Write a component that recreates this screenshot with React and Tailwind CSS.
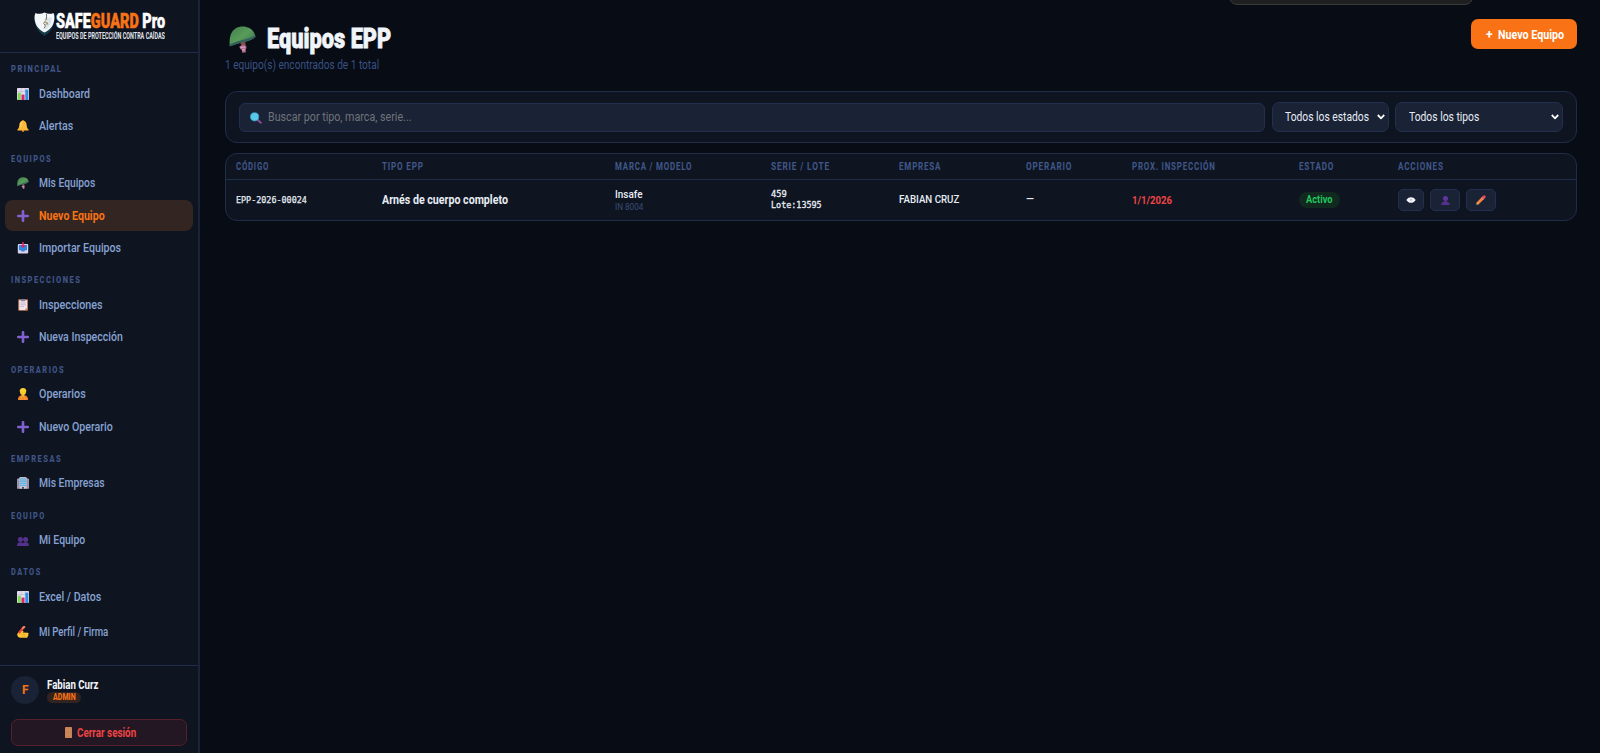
/* eslint-disable react/prop-types */
import { useState, useLayoutEffect, useRef } from 'react';

// Texto condensado a un ancho fijo
const Fit = ({ w, className = '', children }) => {
  const ref = useRef(null);
  const [scale, setScale] = useState(1);

  useLayoutEffect(() => {
    setScale(w / ref.current.offsetWidth);
  }, [w]);

  return (
    <span className={`inline-block whitespace-nowrap text-left ${className}`} style={{ width: w }}>
      <span ref={ref} className="inline-block origin-left" style={{ transform: `scaleX(${scale})` }}>
        {children}
      </span>
    </span>
  );
};

const ChartIcon = () => (
  <svg viewBox="0 0 12 12" className="size-3">
    <rect width="12" height="12" rx=".8" fill="#e4dcec" />
    <path d="M4.2 0v5M8.2 0v4M0 3.5h12" stroke="#b9aec6" strokeWidth=".5" />
    <rect x=".8" y="4.8" width="3" height="7.2" fill="#7ed957" />
    <rect x="4.5" y="6.6" width="3" height="5.4" fill="#e0246f" />
    <rect x="8.3" y="1.6" width="3" height="10.4" fill="#2f8fe0" />
  </svg>
);

const BellIcon = () => (
  <svg viewBox="0 0 12 12" className="size-3">
    <circle cx="6" cy="1.3" r="1" fill="#f0a030" />
    <circle cx="6" cy="10.8" r="1.2" fill="#d9772b" />
    <path d="M6 .6C3.6.6 2.5 2.8 2.3 5.2 2.1 7.4 1.6 8.4.6 9.3c-.4.6-.2 1.3.4 1.3h10c.6 0 .8-.7.4-1.3-1-.9-1.5-1.9-1.7-4.1C9.5 2.8 8.4.6 6 .6Z" fill="#fcb83a" />
    <path d="M5 2C4 3 3.8 5 3.6 7" stroke="#ffdc7a" strokeWidth="1" fill="none" />
  </svg>
);

const HelmetIcon = ({ className = 'size-3' }) => (
  <svg viewBox="0 0 27 27" className={className}>
    <defs>
      <linearGradient id="helmet" x1="0" y1="0" x2="1" y2="1">
        <stop offset="0" stopColor="#437f4c" />
        <stop offset=".5" stopColor="#589c5a" />
        <stop offset="1" stopColor="#356a4c" />
      </linearGradient>
    </defs>
    <path d="M11 17l5-2 .8 4.5-3.8 1.5-1-3Z" fill="#8e4c4c" />
    <path d="M10.500 20.500c1-1.300 5-1.800 6.300-.7 1.200 1.500.8 3-.3 3.500l.5 2.900-3.700.6-.6-3c-1.500-.4-2.300-2-2.200-3.300Z" fill="#b06f93" />
    <path d="M11.500 21.500l4.500-.5M13 24l3-.5" stroke="#e2a9cc" strokeWidth="1" />
    <path d="M.8 20.200C.2 13 1 6 6.500 2.500 13-1.500 22 .8 25 6.500c.8 1.700 1 2.700 1.600 4-2.600 3-6.600 4.300-11.600 5.500-4.500 1-9 2.300-14.200 4.200Z" fill="url(#helmet)" />
    <path d="M.6 18.300C9 14.500 20 13.300 26 9.300l.6 1.500C22 15.800 11 16.300.8 20.400Z" fill="#35605c" />
  </svg>
);

const PlusIcon = () => (
  <svg viewBox="0 0 12 12" className="size-3">
    <path d="M6 1.200v9.600M1.200 6h9.600" stroke="#8160cf" strokeWidth="2.600" strokeLinecap="round" />
  </svg>
);

const InboxIcon = () => (
  <svg viewBox="0 0 12 12" className="size-3">
    <rect x=".8" y="2" width="10.400" height="9.600" rx="1" fill="#dcd0ee" />
    <path d="M2 3h8v5.200H8.200L7.200 9.400H4.800L3.800 8.200H2Z" fill="#2f86dd" />
    <path d="M6 0v4M4.300 3.200 6 5 7.700 3.200" stroke="#e0245e" strokeWidth="1.500" fill="none" />
  </svg>
);

const ClipboardIcon = () => (
  <svg viewBox="0 0 12 12" className="size-3">
    <rect x="1.200" y=".2" width="9.800" height="11.600" rx=".8" fill="#c07a55" />
    <path d="M2.200 1.200H10v8L8.200 10.900h-6Z" fill="#eee6f4" />
    <rect x="4" y="0" width="4.200" height="2.200" rx=".5" fill="#8a7f99" />
    <path d="M3.400 4h5.400M3.400 5.800h5.400M3.400 7.600h3.500" stroke="#a79bb5" strokeWidth=".6" />
    <path d="M8.200 10.900V9.200H10Z" fill="#f2a45c" />
  </svg>
);

const WorkerIcon = () => (
  <svg viewBox="0 0 12 12" className="size-3">
    <path d="M1 12C.8 9 2.400 7.500 4.500 7.200h3C9.600 7.500 11.200 9 11 12Z" fill="#f3862f" />
    <path d="M4.800 6h2.400v2.200L6 9 4.800 8.200Z" fill="#f5b62c" />
    <circle cx="6" cy="4" r="3" fill="#fbc92f" />
    <path d="M2.600 3.600C2.600 1 4.200 0 6 0s3.400 1 3.400 3.600Z" fill="#f7d431" />
    <path d="M4.200 8.500v3.300M7.800 8.500v3.300" stroke="#f7b52b" strokeWidth=".7" />
  </svg>
);

const BuildingIcon = () => (
  <svg viewBox="0 0 12 12" className="size-3">
    <path d="M0 2 3 .8v11H0ZM12 2 9 .8v11h3Z" fill="#a29aae" />
    <path d="M2.600.1h6.800v11.700H2.600Z" fill="#d3cbdc" />
    <path d="M4 1.200v8.600M6 1.200v8.600M8 1.200v8.600" stroke="#29a9e8" strokeWidth="1.300" strokeDasharray="1.600 .5" />
    <path d="M1.200 3.500v6M10.800 3.500v6" stroke="#4f86ad" strokeWidth=".7" strokeDasharray="1.200 .6" />
    <rect x="5" y="10" width="2" height="1.800" fill="#5b4a52" />
  </svg>
);

const PeopleIcon = () => (
  <svg viewBox="0 0 12 12" className="mt-px size-3">
    <g fill="#54318c">
      <circle cx="3.400" cy="4.400" r="2.500" />
      <circle cx="8.600" cy="4.400" r="2.500" />
      <path d="M0 11C0 8.400 1 7.600 2.600 7.200h1.600c1 .2 1.500.5 1.800 1 .3-.5.800-.8 1.800-1h1.600C11 7.600 12 8.400 12 11Z" />
    </g>
  </svg>
);

const PersonIcon = () => (
  <svg viewBox="0 0 10 10" className="size-[9px]">
    <circle cx="5" cy="2.800" r="2.800" fill="#5f36a0" />
    <path d="M.2 10C.2 7.500 1.600 6.800 3.600 6.400V4.800h2.800v1.600c2 .4 3.400 1.100 3.400 3.600Z" fill="#54308c" />
  </svg>
);

const WritingIcon = () => (
  <svg viewBox="0 0 12 12" className="size-3">
    <path d="M.2 8C1.800 5.300 3.800 4 5.700 4.500c1 .4.900 1.500 0 2l5 .2c1.200.2 1.200 1.600.2 1.800.8.3.7 1.400-.2 1.600.3.800 0 1.700-.9 1.700H3.500C1.500 11.800.2 10.500.2 8Z" fill="#fcc533" />
    <path d="M5 8.400h3M5.500 10h3" stroke="#e49a27" strokeWidth=".6" fill="none" />
    <path d="M1.800 7.200 6.600 1.300" stroke="#ee4b3b" strokeWidth="2.200" />
    <path d="M6 2 7.200.9" stroke="#f5805e" strokeWidth="2.200" strokeLinecap="round" />
  </svg>
);

const SearchIcon = () => (
  <svg viewBox="0 0 12 12" className="mt-px size-3">
    <path d="m7.500 7.800 3.300 3" stroke="#8d4b93" strokeWidth="2" strokeLinecap="round" />
    <circle cx="4.600" cy="4.800" r="4.100" fill="#58c8ea" stroke="#3fa5cd" strokeWidth=".7" />
  </svg>
);

const DoorIcon = () => (
  <svg viewBox="0 0 7 11" className="h-[11px] w-[7px]">
    <rect width="7" height="11" rx=".6" fill="#c98256" />
    <path d="M1.500 1.500h1.300v3H1.500ZM4.200 1.500h1.300v3H4.200ZM1.500 6.500h1.300v3H1.500ZM4.200 6.500h1.300v3H4.200Z" fill="#d08b60" />
  </svg>
);

const EyeIcon = () => (
  <svg viewBox="0 0 10 8" className="h-[8px] w-[10px]">
    <path d="M.3 4C1.800 1.900 3.300 1.200 5 1.200s3.200.7 4.700 2.800C8.200 6.100 6.700 6.800 5 6.800S1.800 6.100.3 4Z" fill="#f4f4f8" />
    <circle cx="5" cy="4" r="1.300" fill="#d3d9e0" />
    <circle cx="5" cy="3.800" r=".5" fill="#97a0ab" />
  </svg>
);

const PencilIcon = () => (
  <svg viewBox="0 0 10 10" className="size-[10px]">
    <path d="M1.500 8.500 7 3" stroke="#f58440" strokeWidth="2.800" />
    <path d="M.3 9.800.8 7.300 2.700 9.200Z" fill="#f0b483" />
    <path d="m6.500 3.500 1-1" stroke="#d9cfe0" strokeWidth="2.800" />
    <path d="m7.400 2.600.9-.9" stroke="#ee4a58" strokeWidth="2.800" strokeLinecap="round" />
  </svg>
);

const ShieldLogo = () => (
  <svg viewBox="0 0 21 25" className="h-[25px] w-[21px]">
    <path d="M10.500 1.500C7.500 3 4 3 1.500 1.800.2 4 .3 8 1.300 12c1.500 5.500 5 9.500 9.200 12 4.200-2.500 7.700-6.500 9.200-12 1-4 1.100-8-.2-10.200C17 3 13.500 3 10.500 1.500Z" fill="#173c4c" />
    <path d="M10.500.6C7.500 2.200 4 2.200 1.500 1 .2 3.500.3 7 1.300 10.500c1.400 5 5 8 9.200 9.900 4.200-1.900 7.800-4.900 9.200-9.900 1-3.500 1.100-7-.2-9.500-2.500 1.200-6 1.200-9-.4Z" fill="#f4f7f9" />
    <path d="M11.500 5c2.500 1 4.300.9 6 .4.400 3.200-.4 6.400-2.300 9-1.200 1.600-2.500 2.600-3.900 3.400Z" fill="#dbe4e8" />
    <path d="M12.500 2v6M11.500 8.500l-1.800 3 1.800 2.300-1.500 2.700M12.500 10l1.200 2.500" stroke="#5d686c" strokeWidth=".9" fill="none" />
    <circle cx="11.800" cy="7.600" r="1" fill="#c8b07a" />
    <path d="m10.500 10 2.600 1.500-2.400 2" stroke="#c9a24e" strokeWidth="1" fill="none" />
  </svg>
);

const SECTIONS = [
  {
    title: 'PRINCIPAL', w: 51,
    items: [
      { label: 'Dashboard', w: 51, icon: ChartIcon },
      { label: 'Alertas', w: 34.5, icon: BellIcon }
    ]
  },
  {
    title: 'EQUIPOS', w: 41,
    items: [
      { label: 'Mis Equipos', w: 56.5, icon: HelmetIcon },
      { label: 'Nuevo Equipo', w: 65.5, icon: PlusIcon, active: true },
      { label: 'Importar Equipos', w: 82.5, icon: InboxIcon }
    ]
  },
  {
    title: 'INSPECCIONES', w: 70.5,
    items: [
      { label: 'Inspecciones', w: 63.5, icon: ClipboardIcon },
      { label: 'Nueva Inspección', w: 83.5, icon: PlusIcon }
    ]
  },
  {
    title: 'OPERARIOS', w: 54.5,
    items: [
      { label: 'Operarios', w: 46.5, icon: WorkerIcon },
      { label: 'Nuevo Operario', w: 73.5, icon: PlusIcon }
    ]
  },
  {
    title: 'EMPRESAS', w: 51,
    items: [{ label: 'Mis Empresas', w: 65.5, icon: BuildingIcon }]
  },
  {
    title: 'EQUIPO', w: 35,
    items: [{ label: 'Mi Equipo', w: 46, icon: PeopleIcon }]
  },
  {
    title: 'DATOS', w: 31,
    items: [
      { label: 'Excel / Datos', w: 62, icon: ChartIcon },
      { label: 'Mi Perfil / Firma', w: 69, icon: WritingIcon, last: true }
    ]
  }
];

const COLUMNS = [
  { label: 'CÓDIGO', w: 33.5, col: 'w-[146px]' },
  { label: 'TIPO EPP', w: 41.5, col: 'w-[233px]' },
  { label: 'MARCA / MODELO', w: 77.5, col: 'w-[156px]' },
  { label: 'SERIE / LOTE', w: 59, col: 'w-[127.5px]' },
  { label: 'EMPRESA', w: 42.5, col: 'w-[127.5px]' },
  { label: 'OPERARIO', w: 46, col: 'w-[106px]' },
  { label: 'PROX. INSPECCIÓN', w: 84, col: 'w-[166.5px]' },
  { label: 'ESTADO', w: 35.5, col: 'w-[99.5px]' },
  { label: 'ACCIONES', w: 45.5, col: '' }
];

const Sidebar = () => (
  <aside className="flex w-[200px] shrink-0 flex-col border-r-2 border-[#1a2338] bg-[#0e1521]">
    <div className="flex h-[53px] shrink-0 items-start border-b border-[#1f2d4d] pt-3 pl-[33.500px]">
      <ShieldLogo />
      <div className="flex flex-col pl-px">
        <Fit w={109} className="h-[20px] text-[20px] leading-[19px] font-black text-white [-webkit-text-stroke:0.5px]">
          SAFE<span className="text-[#f97316]">GUARD</span> Pro
        </Fit>
        <Fit w={109} className="h-2 text-[8.5px] leading-[8px] font-bold text-[#e2e6ec]">
          EQUIPOS DE PROTECCIÓN CONTRA CAÍDAS
        </Fit>
      </div>
    </div>

    <nav className="flex-1 px-[5px] pt-[1.250px]">
      {SECTIONS.map((section) => (
        <div key={section.title}>
          <div className="flex h-[24.250px] items-center pt-[6px] pl-[5.500px]">
            <Fit w={section.w} className="text-[9px] leading-3 font-extrabold tracking-[1.800px] text-[#41568a]">{section.title}</Fit>
          </div>
          {section.items.map((item) => (
            <a
              key={item.label}
              className={`mb-0.5 flex h-[30.500px] items-center gap-2.5 rounded-lg pl-[12px] text-xs ${
                item.active ? 'bg-[#332521] font-bold text-[#f97316]' : 'font-medium text-[#87a2d3]'
              } ${item.last ? 'mt-[4.500px]' : ''}`}
            >
              <item.icon />
              <Fit w={item.w}>{item.label}</Fit>
            </a>
          ))}
        </div>
      ))}
    </nav>

    <div className="h-[88px] shrink-0 border-t border-[#1f2d4d] px-[11px] pt-2.5">
      <div className="flex items-center gap-2">
        <div className="flex size-7 items-center justify-center rounded-full bg-[#1a2235] text-[13px] font-bold text-[#f97316]">
          <Fit w={6.5}>F</Fit>
        </div>
        <div className="flex flex-col items-start">
          <Fit w={51.5} className="h-[14px] text-xs leading-[15px] font-bold text-[#f1f5f9]">Fabian Curz</Fit>
          <span className="flex h-[11px] items-center rounded-full bg-[#33231e] px-[5.500px] text-[8.500px] leading-[10px] font-extrabold text-[#f97316]">
            <Fit w={22.5}>ADMIN</Fit>
          </span>
        </div>
      </div>
      <button className="mt-[15px] flex h-[27px] w-[176px] items-center justify-center gap-[5px] rounded-[7px] border border-[#55202c] bg-[#221723] pl-[3px] text-xs font-bold text-[#ef4444]">
        <DoorIcon />
        <Fit w={59}>Cerrar sesión</Fit>
      </button>
    </div>
  </aside>
);

const Select = ({ label, w, className }) => (
  <button className={`flex h-[30px] items-center justify-between rounded-[7px] border border-[#222f4e] bg-[#1a2235] pr-[3px] pl-[12.500px] text-xs text-[#e8edf5] ${className}`}>
    <Fit w={w}>{label}</Fit>
    <svg viewBox="0 0 8 6" className="h-1.5 w-2">
      <path d="m.8 1 3.200 3.300L7.200 1" stroke="#fff" strokeWidth="1.800" fill="none" />
    </svg>
  </button>
);

const ActionButton = ({ className, children }) => (
  <button className={`flex h-[22px] items-center justify-center rounded-[5px] border border-[#222f4e] bg-[#1a2235] ${className}`}>
    {children}
  </button>
);

const EquiposTable = () => (
  <div className="mt-[10px] h-[67.500px] overflow-hidden rounded-[12px] border border-[#212c48] bg-[#0e1521]">
    <table className="w-full table-fixed border-separate border-spacing-0 text-left">
      <thead>
        <tr>
          {COLUMNS.map((column) => (
            <th key={column.label} className={`h-[26px] border-b border-[#1f2d4d] p-0 pt-px pl-[10.500px] align-middle text-[10px] leading-[12px] font-bold tracking-[1px] text-[#41578a] ${column.col}`}>
              <Fit w={column.w} className="block">{column.label}</Fit>
            </th>
          ))}
        </tr>
      </thead>
      <tbody>
        <tr className="h-[40px] text-[#e8edf5] [&>td]:p-0 [&>td]:pl-[10.500px]">
          <td className="font-['DejaVu_Sans_Mono',monospace] text-[9px] leading-3 [-webkit-text-stroke:0.25px]">
            <Fit w={71} className="block">EPP-2026-00024</Fit>
          </td>
          <td className="text-xs leading-4 font-bold">
            <Fit w={126} className="block">Arnés de cuerpo completo</Fit>
          </td>
          <td>
            <div className="flex flex-col">
              <Fit w={27} className="h-[13px] text-[11px] leading-[14px] font-medium">Insafe</Fit>
              <Fit w={28} className="h-3 text-[9px] leading-3 text-[#3a4c76]">IN 8004</Fit>
            </div>
          </td>
          <td className="font-['DejaVu_Sans_Mono',monospace] text-[9px] [-webkit-text-stroke:0.3px]">
            <div className="flex flex-col">
              <Fit w={15.5} className="h-[11px] leading-[11px]">459</Fit>
              <Fit w={50.5} className="h-[11px] leading-[11px]">Lote:13595</Fit>
            </div>
          </td>
          <td className="text-[11px] leading-4 font-medium">
            <Fit w={60} className="block">FABIAN CRUZ</Fit>
          </td>
          <td className="text-[11px] leading-4 font-medium">
            <Fit w={7.5} className="block">—</Fit>
          </td>
          <td className="text-[11.500px] leading-4 font-bold text-[#ef4444]">
            <Fit w={40} className="block">1/1/2026</Fit>
          </td>
          <td>
            <span className="flex h-4 w-[41.500px] items-center justify-center rounded-full bg-[#11291f] text-[10.500px] font-bold text-[#22c55e]">
              <Fit w={26.5}>Activo</Fit>
            </span>
          </td>
          <td>
            <div className="flex gap-1.5">
              <ActionButton className="w-[26px]"><EyeIcon /></ActionButton>
              <ActionButton className="w-[30px]"><PersonIcon /></ActionButton>
              <ActionButton className="w-[30px]"><PencilIcon /></ActionButton>
            </div>
          </td>
        </tr>
      </tbody>
    </table>
  </div>
);

const App = () => (
  <div className="relative flex h-[753px] w-[1600px] overflow-hidden bg-[#070c15] font-['Roboto',sans-serif]">
    <Sidebar />

    <main className="flex-1 pt-[19px] pr-[23.500px] pl-[24.500px]">
      <header className="flex h-[72px] items-start justify-between">
        <div>
          <div className="flex h-10 items-center pl-[4.500px]">
            <HelmetIcon className="size-[27px]" />
            <h1 className="ml-[10.500px] flex text-[28px] leading-10 font-black text-[#f1f5f9] [-webkit-text-stroke:0.8px]">
              <Fit w={124.5}>Equipos EPP</Fit>
            </h1>
          </div>
          <p className="-mt-px flex h-3.5 items-center text-xs leading-[14px] text-[#3a5184]">
            <Fit w={154}>1 equipo(s) encontrados de 1 total</Fit>
          </p>
        </div>
        <button className="flex h-[30px] w-[105.500px] items-center rounded-[7px] bg-[#f97316] pt-px pl-[15px] text-xs font-bold text-white">
          <Fit w={7}>+</Fit>
          <Fit w={66} className="ml-[4.500px]">Nuevo Equipo</Fit>
        </button>
      </header>

      <div className="flex h-[52px] items-center gap-[6.500px] rounded-[12px] border border-[#212c48] bg-[#0e1521] px-[13px]">
        <div className="flex h-[29px] flex-1 items-center gap-[5.500px] rounded-[6px] border border-[#222f4e] bg-[#1a2235] pl-[10.500px] text-xs text-[#6f737a]">
          <SearchIcon />
          <Fit w={143.5}>Buscar por tipo, marca, serie...</Fit>
        </div>
        <Select label="Todos los estados" w={84} className="w-[117px]" />
        <Select label="Todos los tipos" w={70.5} className="w-[167.500px]" />
      </div>

      <EquiposTable />
    </main>

    {/* Globo flotante en el borde superior */}
    <div className="absolute -top-5 left-[1229px] h-[25px] w-[244px] rounded-lg border border-[#3a3a3a] bg-[#1f1f1f]" />
  </div>
);

export default App;
